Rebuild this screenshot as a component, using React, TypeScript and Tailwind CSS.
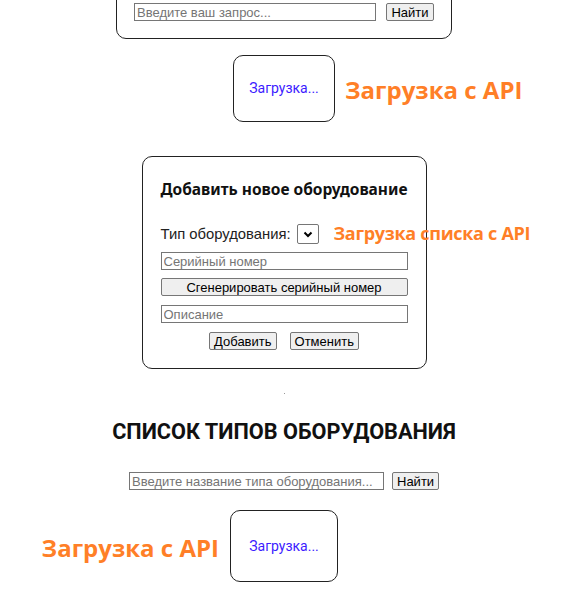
import React from 'react';

// --- small shared pieces ---
const Field: React.FC<{ placeholder: string; className?: string }> = ({ placeholder, className = '' }) => (
  <input
    placeholder={placeholder}
    className={`h-[18px] border border-[#767676] bg-white px-[2px] text-[13px] leading-none text-black placeholder:text-[#757575] outline-none [font-family:'Liberation_Sans',Arial,sans-serif] ${className}`}
  />
);

const Btn: React.FC<{ children: React.ReactNode; className?: string }> = ({ children, className = '' }) => (
  <button
    className={`h-[18px] rounded-[2px] border border-[#767676] bg-[#efefef] px-[4px] text-[13px] leading-none text-black [font-family:'Liberation_Sans',Arial,sans-serif] ${className}`}
  >
    {children}
  </button>
);

const Note: React.FC<{ children: React.ReactNode; className?: string }> = ({ children, className = '' }) => (
  <span className={`absolute whitespace-nowrap font-bold text-[#ff7f27] [font-family:'Open_Sans',sans-serif] ${className}`}>
    {children}
  </span>
);

const Loading: React.FC<{ className?: string }> = ({ className = '' }) => (
  <div className={`flex items-center justify-center rounded-[10px] border border-[#222] text-[14px] text-[#3d1cff] [font-family:Roboto,sans-serif] ${className}`}>
    Загрузка...
  </div>
);

export default function App() {
  return (
    <div className="flex min-h-[599px] flex-col items-center overflow-hidden bg-white pl-[3px] text-black">
      {/* search card, cut at the top */}
      <div className="-mt-[30px] flex w-[336px] items-center gap-[10px] rounded-[10px] border border-[#222] pb-[17px] pl-[17px] pt-[32px]">
        <Field placeholder="Введите ваш запрос..." className="w-[242px]" />
        <Btn className="w-[48px] px-0">Найти</Btn>
      </div>

      {/* loading + note */}
      <div className="relative mt-[16px]">
        <Loading className="h-[67px] w-[102px]" />
        <Note className="left-[112px] top-[17px] text-[24px]">Загрузка с API</Note>
      </div>

      {/* add form */}
      <div className="relative mt-[34px] w-[285px] rounded-[10px] border border-[#222] px-[18px] pb-[18px] pt-[20px]">
        <h3 className="whitespace-nowrap text-[15.5px] font-bold leading-[24px] text-[#111] [font-family:'Noto_Sans',sans-serif]">
          Добавить новое оборудование
        </h3>
        <div className="relative mt-[23px] flex h-[20px] items-center gap-[6px] text-[14.8px] text-[#222] [font-family:'Liberation_Sans',Arial,sans-serif]">
          <span>Тип оборудования:</span>
          <div className="flex h-[20px] w-[22px] items-center justify-center rounded-[2px] border border-[#767676] bg-white">
            <svg width="10" height="7" viewBox="0 0 10 7">
              <path d="M1.5 1.5 L5 5 L8.5 1.5" fill="none" stroke="#000" strokeWidth="2" />
            </svg>
          </div>
          <Note className="left-[173px] top-[-4px] text-[18px] tracking-[-0.3px]">Загрузка списка с API</Note>
        </div>
        <Field placeholder="Серийный номер" className="mt-[8px] block w-[247px]" />
        <Btn className="mt-[8px] block w-[247px]">Сгенерировать серийный номер</Btn>
        <Field placeholder="Описание" className="mt-[9px] block w-[247px]" />
        <div className="mt-[9px] flex justify-center gap-[13px]">
          <Btn>Добавить</Btn>
          <Btn>Отменить</Btn>
        </div>
      </div>

      <div className="mt-[24px] h-px w-px bg-[#999]" />

      <h2 className="mt-[25px] text-[21.7px] font-bold leading-[26px] text-[#111] [font-family:Roboto,sans-serif]">
        СПИСОК ТИПОВ ОБОРУДОВАНИЯ
      </h2>

      <div className="mt-[27px] flex items-center gap-[8px]">
        <Field placeholder="Введите название типа оборудования..." className="w-[255px]" />
        <Btn className="w-[47px] px-0">Найти</Btn>
      </div>

      <div className="relative mt-[20px]">
        <Loading className="h-[72px] w-[108px]" />
        <Note className="right-[119px] top-[20px] text-[24px]">Загрузка с API</Note>
      </div>
    </div>
  );
}
